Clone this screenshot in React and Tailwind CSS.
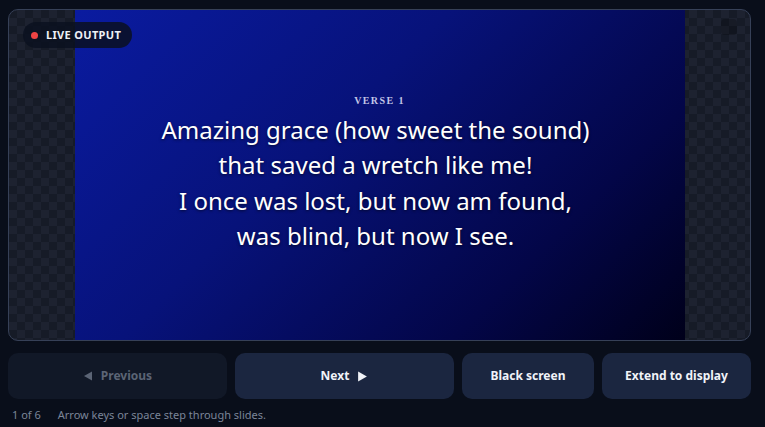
import React from "react";

const checker = {
  backgroundColor: "#161b27",
  backgroundImage:
    "linear-gradient(45deg, #1d2230 25%, transparent 25%, transparent 75%, #1d2230 75%), linear-gradient(45deg, #1d2230 25%, transparent 25%, transparent 75%, #1d2230 75%)",
  backgroundSize: "16px 16px",
  backgroundPosition: "0 0, 8px 8px",
};

const lines = [
  "Amazing grace (how sweet the sound)",
  "that saved a wretch like me!",
  "I once was lost, but now am found,",
  "was blind, but now I see.",
];

export default function App() {
  return (
    <div className="h-[427px] w-[765px] bg-[#090e1a] pl-2 pt-[9px] font-['Noto_Sans',sans-serif]">
      <div className="w-[743px]">
        {/* Preview */}
        <div
          className="relative flex h-[332px] justify-center overflow-hidden rounded-[10px] border border-[#364057]"
          style={checker}
        >
          <div className="flex h-full w-[610px] flex-col items-center justify-center bg-[linear-gradient(135deg,#0a1ba0_0%,#07127a_40%,#030648_75%,#00001a_100%)] pb-[4px] pr-[8px] text-center">
            <div className="mb-[4px] pl-[8px] font-['Liberation_Serif',serif] text-[10px] font-bold tracking-[0.14em] text-[#c3c6e6]">
              VERSE 1
            </div>
            {lines.map((l) => (
              <div
                key={l}
                className="text-[24px] leading-[35.5px] text-white [text-shadow:0_1px_3px_rgba(0,0,0,0.6)]"
              >
                {l}
              </div>
            ))}
          </div>

          <div className="absolute left-[14px] top-[12px] flex h-[26px] items-center gap-[8px] rounded-full bg-[#0b1020]/85 pl-[8px] pr-[11px]">
            <span className="h-[7px] w-[7px] rounded-full bg-[#ef4444]" />
            <span className="text-[11px] font-bold tracking-[0.03em] text-[#eef0f5]">LIVE OUTPUT</span>
          </div>
          <div className="absolute right-[13px] top-[9px] h-[16px] w-[16px] rounded-[4px] bg-black/20" />
        </div>

        {/* Controls */}
        <div className="mt-[12px] flex h-[46px] gap-[8px]">
          <button className="flex flex-1 items-center justify-center gap-[8px] rounded-[10px] bg-[#111827] text-[12px] font-bold text-[#5b6475]">
            <svg width="10" height="10" viewBox="0 0 10 10">
              <path d="M9 0.5 L1 5 L9 9.5 Z" fill="currentColor" />
            </svg>
            Previous
          </button>
          <button className="flex flex-1 items-center justify-center gap-[8px] rounded-[10px] bg-[#1b2640] text-[12px] font-bold text-[#f1f3f8]">
            Next
            <svg width="11" height="11" viewBox="0 0 10 10">
              <path d="M1 0.5 L9 5 L1 9.5 Z" fill="currentColor" />
            </svg>
          </button>
          <button className="flex w-[132px] items-center justify-center rounded-[10px] bg-[#1b2640] text-[12px] font-bold text-[#f1f3f8]">
            Black screen
          </button>
          <button className="flex w-[149px] items-center justify-center rounded-[10px] bg-[#1b2640] text-[12px] font-bold text-[#f1f3f8]">
            Extend to display
          </button>
        </div>

        <div className="mt-[8px] flex gap-[17px] pl-[4px] text-[11px] text-[#7b8598]">
          <span>1 of 6</span>
          <span>Arrow keys or space step through slides.</span>
        </div>
      </div>
    </div>
  );
}
